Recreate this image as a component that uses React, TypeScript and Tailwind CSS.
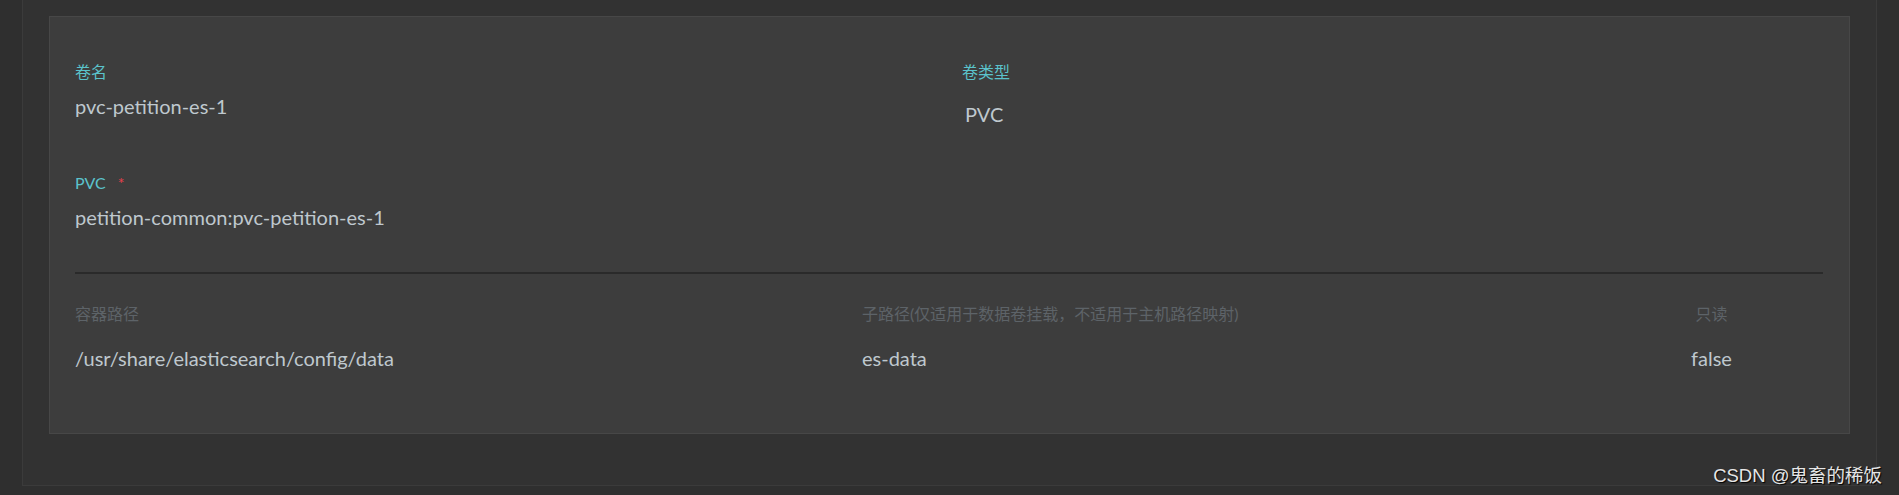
import React from 'react';

const font = { fontFamily: 'Lato, "Noto Sans CJK SC", sans-serif' };

const Label: React.FC<{ children: React.ReactNode; muted?: boolean; className?: string }> = ({ children, muted, className }) => (
  <div className={`text-[16px] leading-[24px] ${muted ? 'text-[#5d6368]' : 'text-[#5bc3cc]'} ${className ?? ''}`}>{children}</div>
);

const Value: React.FC<{ children: React.ReactNode; className?: string }> = ({ children, className }) => (
  <div className={`text-[20px] leading-[24px] text-[#bfc8ce] ${className ?? ''}`}>{children}</div>
);

export default function App() {
  return (
    <div className="relative h-[495px] w-full overflow-hidden bg-[#2f2f2f]" style={font}>
      <div className="ml-[22px] h-[486px] w-[1855px] border-x border-b border-[#3b3b3b] bg-[#323232] pl-[26px] pt-[16px]">
        <div className="h-[418px] w-[1801px] border border-[#474747] bg-[#3d3d3d] pl-[25px] pr-[25px] pt-[43px]">
          {/* volume name / type */}
          <div className="flex">
            <div className="w-[887px]">
              <Label>卷名</Label>
              <Value className="mt-[10px]">pvc-petition-es-1</Value>
            </div>
            <div>
              <Label>卷类型</Label>
              <Value className="mt-[18px] pl-[3px]">PVC</Value>
            </div>
          </div>

          {/* pvc */}
          <div className="mt-[45px]">
            <Label>
              PVC <span className="ml-[8px] text-[#e5404c]">*</span>
            </Label>
            <Value className="mt-[10px]">petition-common:pvc-petition-es-1</Value>
          </div>

          <div className="mt-[43px] h-[2px] w-[1748px] bg-[#2a2a2a]" />

          {/* mounts */}
          <div className="mt-[28px] flex w-[1748px]">
            <div className="w-[787px]">
              <Label muted>容器路径</Label>
              <Value className="mt-[20px]">/usr/share/elasticsearch/config/data</Value>
            </div>
            <div className="w-[738px]">
              <Label muted>子路径(仅适用于数据卷挂载，不适用于主机路径映射)</Label>
              <Value className="mt-[20px]">es-data</Value>
            </div>
            <div className="flex-1 text-center">
              <Label muted>只读</Label>
              <Value className="mt-[20px]">false</Value>
            </div>
          </div>
        </div>
      </div>

      <div
        className="absolute right-[17px] top-[462px] text-[18.5px] leading-[28px] text-[#e6e6e6]"
        style={{ fontFamily: '"Liberation Sans", "Noto Sans CJK SC", sans-serif', textShadow: '1px 1px 1px #000' }}
      >
        CSDN @鬼畜的稀饭
      </div>
    </div>
  );
}
